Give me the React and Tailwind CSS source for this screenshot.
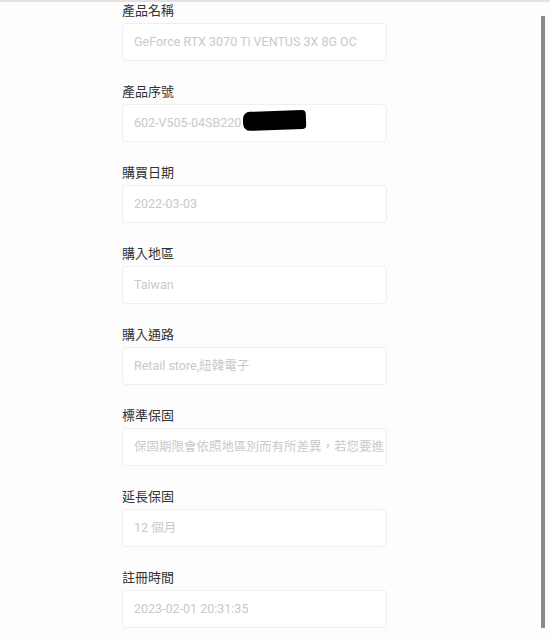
const FIELDS = [
  { label: "產品名稱", value: "GeForce RTX 3070 Ti VENTUS 3X 8G OC" },
  { label: "產品序號", value: "602-V505-04SB220", redacted: true },
  { label: "購買日期", value: "2022-03-03" },
  { label: "購入地區", value: "Taiwan" },
  { label: "購入通路", value: "Retail store,紐韓電子" },
  { label: "標準保固", value: "保固期限會依照地區別而有所差異，若您要進" },
  { label: "延長保固", value: "12 個月" },
  { label: "註冊時間", value: "2023-02-01 20:31:35" },
];

export default function App() {
  return (
    <div className="relative w-[550px] h-[640px] overflow-hidden bg-[#fdfdfd] border-t-2 border-[#e3e3e3] font-['Roboto','Noto_Sans_CJK_TC',sans-serif]">
      <div className="pl-[122px] flex flex-col">
        {FIELDS.map((f) => (
          <div key={f.label} className="h-[81px]">
            <p className="text-[13px] leading-[17px] text-[#333]">{f.label}</p>
            <div className="relative mt-[4px] w-[265px] h-[38px] rounded-[4px] border border-[#efefef] bg-white pl-[11px] flex items-center">
              <span className="text-[12.5px] text-[#c9c9c9] whitespace-nowrap">{f.value}</span>
              {f.redacted && (
                <span className="absolute left-[120px] top-[6px] w-[63px] h-[19px] rounded-l-[7px] rounded-r-[4px] bg-black -rotate-2" />
              )}
            </div>
          </div>
        ))}
      </div>
      {/* scrollbar */}
      <div className="absolute right-[5px] top-[14px] w-[4px] h-[612px] bg-[#8a8a8a]" />
    </div>
  );
}
